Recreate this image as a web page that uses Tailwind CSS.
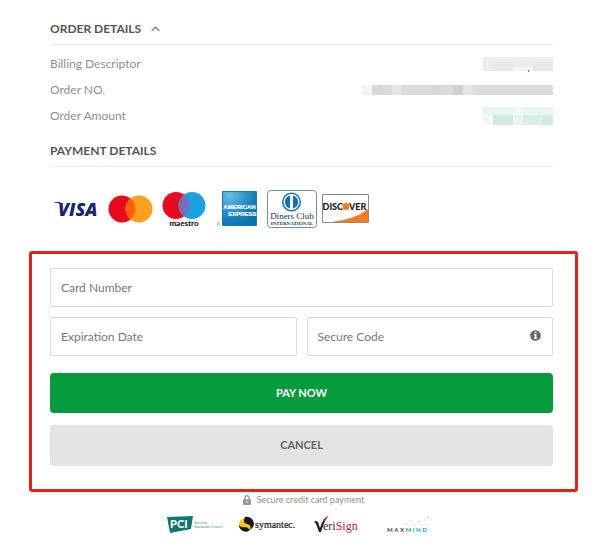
<!DOCTYPE html>
<html lang="en">
<head>
    <meta charset="UTF-8">
    <meta name="viewport" content="width=device-width, initial-scale=1.0">
    <title>Payment</title>
    <script src="https://cdn.jsdelivr.net/npm/@tailwindcss/browser@4"></script>
</head>
<body class="bg-white font-['Lato',sans-serif] text-[12px] text-[#8f8f8f]">
    <main class="pl-[29px] pr-[22px] pt-[19px]">
        <div class="pl-[21px] pr-[25px]">
            <!-- Order details -->
            <section>
                <h2 class="border-b border-[#e8e8e8] pb-[5px] leading-5 font-bold text-[#555]">
                    <button type="button" class="flex items-center gap-[10px]" aria-expanded="true">
                        ORDER DETAILS
                        <svg class="h-[6px] w-[9px]" viewBox="0 0 9 6" fill="none" stroke="#777" stroke-width="1.2"><path d="M.6 5.2 4.5 1.2 8.4 5.2"/></svg>
                    </button>
                </h2>
                <dl class="pt-[6px] leading-[26px]">
                    <div class="flex items-center justify-between">
                        <dt>Billing Descriptor</dt>
                        <dd><svg class="h-[15px] w-[70px]" viewBox="0 0 70 15" shape-rendering="crispEdges"><path fill="#eeecec" d="M0 0h70v14H0z"/><path fill="#e9e8e8" d="M10 5h20v9H10zM50 5h20v9H50z"/><path fill="#f5f4f4" d="M30 10h20v4H30z"/><path fill="#777" d="M45 13h1v2h-1z"/></svg></dd>
                    </div>
                    <div class="flex items-center justify-between">
                        <dt>Order NO.</dt>
                        <dd><svg class="h-[10px] w-[191px]" viewBox="0 0 191 10" shape-rendering="crispEdges"><path fill="#dddbdc" d="M10 0h181v10H10z"/><path fill="#f5f4f4" d="M0 0h10v10H0z"/><path fill="#d8d6d7" d="M10 0h10v10H10zM70 0h10v10H70z"/><path fill="#d2cecf" d="M91 0h10v10H91z"/><path fill="#e3e4e6" d="M30 0h10v10H30zM101 0h10v10h-10z"/></svg></dd>
                    </div>
                    <div class="flex items-center justify-between">
                        <dt>Order Amount</dt>
                        <dd><svg class="h-[18px] w-[70px]" viewBox="0 0 70 18" shape-rendering="crispEdges"><path fill="#e9f5ef" d="M0 0h70v18H0z"/><path fill="#f2f8f5" d="M0 8h10v10H0zM30 0h10v8H30z"/><path fill="#d0e9dc" d="M10 8h20v10H10zM60 8h10v10H60z"/><path fill="#daeee4" d="M40 8h20v10H40z"/></svg></dd>
                    </div>
                </dl>
            </section>

            <!-- Payment details -->
            <section>
                <h2 class="mt-3 border-b border-[#e8e8e8] pb-[5px] leading-5 font-bold text-[#555]">PAYMENT DETAILS</h2>
                <ul class="mt-[23px] flex h-[38px] items-center pl-1">
                    <li>
                        <svg class="h-[32px] w-[50px]" viewBox="0 0 50 32" role="img" aria-label="Visa">
                            <path fill="#1a2470" d="M0 9h6l2 4-2-2Q4 9.800 0 9.500z"/>
                            <text x="4" y="23" font-family="Open Sans" font-size="18" font-weight="800" font-style="italic" fill="#1a2470">VISA</text>
                        </svg>
                    </li>
                    <li class="ml-1">
                        <svg class="h-[28px] w-[46px]" viewBox="0 0 46 28" role="img" aria-label="Mastercard">
                            <circle cx="14" cy="14" r="13.5" fill="#e80b20"/>
                            <circle cx="31" cy="14" r="13.5" fill="#f9a020"/>
                            <path d="M22.5 3.5a13.5 13.5 0 0 1 0 21 13.5 13.5 0 0 1 0-21" fill="#ff6010"/>
                        </svg>
                    </li>
                    <li class="ml-2">
                        <svg class="h-[38px] w-[44px]" viewBox="0 0 44 38" role="img" aria-label="Maestro">
                            <circle cx="14" cy="15.5" r="13.5" fill="#e80b20"/>
                            <circle cx="30" cy="15.5" r="13.5" fill="#1ba0e2"/>
                            <path d="M22 4.6a13.5 13.5 0 0 1 0 21.8 13.5 13.5 0 0 1 0-21.8" fill="#7a6cba"/>
                            <text x="22" y="36" text-anchor="middle" font-family="Lato" font-size="8" font-weight="900" fill="#151515">maestro</text>
                        </svg>
                    </li>
                    <li class="ml-[10px]">
                        <svg class="h-[36px] w-[42px]" viewBox="0 0 42 36" role="img" aria-label="American Express">
                            <defs>
                                <radialGradient id="amex" cx=".2" cy=".1" r="1"><stop offset="0" stop-color="#65bee5"/><stop offset=".7" stop-color="#1681be"/><stop offset="1" stop-color="#0870ad"/></radialGradient>
                            </defs>
                            <path d="M6.500 .500h34v34h-34z" fill="url(#amex)" stroke="#1978ad"/>
                            <g font-family="Liberation Sans" font-weight="700" font-size="6" fill="#fff" stroke="#fff" stroke-width=".2">
                                <text x="23.500" y="17.500" text-anchor="middle">AMERICAN</text>
                                <text x="40.500" y="24.500" text-anchor="end">EXPRESS</text>
                            </g>
                            <circle cx="2.500" cy="33" r="1.200" fill="none" stroke="#6d9bb5" stroke-width=".7"/>
                        </svg>
                    </li>
                    <li class="ml-[9px]">
                        <svg class="h-[38px] w-[50px]" viewBox="0 0 50 38" role="img" aria-label="Diners Club International">
                            <rect x=".5" y=".5" width="49" height="37" rx="3" fill="#fff" stroke="#6592b5"/>
                            <circle cx="24.500" cy="12" r="9.500" fill="#1673b1"/>
                            <circle cx="24.500" cy="12" r="8" fill="#fff"/>
                            <path d="M23 5.500a6.700 6.700 0 0 0 0 13zM26 5.500a6.700 6.700 0 0 1 0 13z" fill="#1673b1"/>
                            <g font-family="Liberation Serif" text-anchor="middle" fill="#243647">
                                <text x="25" y="29" font-size="9">Diners Club</text>
                                <text x="25" y="35" font-size="5" font-weight="700">INTERNATIONAL</text>
                            </g>
                        </svg>
                    </li>
                    <li class="ml-[5px]">
                        <svg class="h-[30px] w-[48px]" viewBox="0 0 48 30" role="img" aria-label="Discover">
                            <path d="M.5.500h46v28H.5z" fill="#fff" stroke="#8a8a8a"/>
                            <path d="M46 15v13H10Q34 25 46 15" fill="#f47b20"/>
                            <g font-family="Lato" font-size="9" font-weight="900" fill="#202020">
                                <text x="21" y="15.500" text-anchor="end">DISC</text>
                                <text x="27" y="15.500">VER</text>
                            </g>
                            <circle cx="24" cy="12.500" r="3.500" fill="#f47b20"/>
                        </svg>
                    </li>
                </ul>
            </section>
        </div>

        <!-- Card form -->
        <form class="mt-[23px] rounded-[3px] border-3 border-[#e8201a] pt-[14px] pr-[22px] pb-[23px] pl-[18px]">
            <div class="grid grid-cols-2 gap-[10px]">
                <input type="text" aria-label="Card Number" placeholder="Card Number" class="col-span-2 h-[39px] w-full rounded-[2px] border border-[#d9d9d9] px-[10px] placeholder:text-[#777]">
                <input type="text" aria-label="Expiration Date" placeholder="Expiration Date" class="h-[39px] w-full rounded-[2px] border border-[#d9d9d9] px-[10px] placeholder:text-[#777]">
                <div class="relative">
                    <input type="text" aria-label="Secure Code" placeholder="Secure Code" class="h-[39px] w-full rounded-[2px] border border-[#d9d9d9] pr-8 pl-[10px] placeholder:text-[#777]">
                    <button type="button" aria-label="About the secure code" class="absolute top-[13px] right-3">
                        <svg class="h-[11px] w-[11px]" viewBox="0 0 11 11"><circle cx="5.500" cy="5.500" r="5.300" fill="#666"/><path fill="#fff" d="M4.700 1.700h1.700v1.500H4.700zM4 4.200h2.400v3.500h.8v1.200H3.900V7.700h.8V5.400H4z"/></svg>
                    </button>
                </div>
            </div>
            <button type="submit" class="mt-[17px] h-10 w-full rounded-[4px] bg-[#059a3b] text-[11px] font-bold text-white">PAY NOW</button>
            <button type="button" class="mt-3 h-[41px] w-full rounded-[4px] bg-[#e4e4e4] text-[11px] font-bold text-[#666]">CANCEL</button>
        </form>

        <!-- Security logos -->
        <footer>
            <p class="flex items-center justify-center gap-[6px] text-[9px] leading-4">
                <svg class="h-[10px] w-[8px]" viewBox="0 0 8 10"><path fill="none" stroke="#999" stroke-width="1.400" d="M2 5V2.700a2 2 0 0 1 4 0V5"/><rect y="4.300" width="8" height="5.700" rx=".7" fill="#999"/><path fill="#fff" d="M3.600 6h.8v2h-.8z"/></svg>
                Secure credit card payment
            </p>
            <ul class="mt-2 flex items-center justify-center pr-[10px]">
                <li>
                    <svg class="h-[18px] w-[58px]" viewBox="0 0 58 18" role="img" aria-label="PCI Security Standards Council">
                        <path fill="#13756f" d="M0 1 26 0 24 13 3 17z"/>
                        <text x="3" y="12" font-family="Lato" font-size="11" font-weight="900" fill="#fff">PCI</text>
                        <g font-family="Liberation Sans" font-size="3.500" fill="#4d8f99"><text x="27" y="8">Security</text><text x="27" y="12">Standards Council</text></g>
                    </svg>
                </li>
                <li class="ml-[13px]">
                    <svg class="h-[18px] w-[58px]" viewBox="0 0 58 18" role="img" aria-label="Symantec">
                        <circle cx="7.500" cy="8.500" r="6.500" fill="#f8c80d"/>
                        <path fill="#151515" d="M7 1a7 7 0 0 1 5 13Q14 9 9 8 4 7 7 1M1 9q2 3 6 2 3 0 5 3-3 3-7 1-4-2-4-6"/>
                        <text x="17" y="11.500" font-family="Liberation Serif" font-size="10" fill="#222" stroke="#222" stroke-width=".2">symantec.</text>
                    </svg>
                </li>
                <li class="ml-[18px]">
                    <svg class="h-[18px] w-[48px]" viewBox="0 0 48 18" role="img" aria-label="VeriSign">
                        <path fill="#222" d="M0 6q2-2 4 0l2 6Q8 4 14 0q-4 6-7 16H5L2 8Q1 6 0 6"/>
                        <path fill="#b6204d" d="M9 4q2-3 6-4-3 2-4.500 5z"/>
                        <text x="9" y="14" font-family="Liberation Serif" font-size="12" fill="#333">eri<tspan fill="#b5205d">Sign</tspan></text>
                    </svg>
                </li>
                <li class="ml-6">
                    <svg class="h-[18px] w-[44px]" viewBox="0 0 44 18" role="img" aria-label="MaxMind">
                        <g font-family="Lato" font-size="6" font-weight="900" letter-spacing="1.500"><text x="1" y="16" fill="#555">MAX<tspan fill="#20a9c5">MIND</tspan></text></g>
                        <g fill="#83ccda"><circle cx="20" cy="8" r=".7"/><circle cx="25" cy="5" r=".6"/><circle cx="28" cy="9" r=".7"/><circle cx="33" cy="6" r=".7"/><circle cx="36" cy="9" r=".6"/><circle cx="39" cy="4" r=".7"/><circle cx="42" cy="1.500" r=".8"/><circle cx="41" cy="8" r=".6"/></g>
                    </svg>
                </li>
            </ul>
        </footer>
    </main>
</body>
</html>
